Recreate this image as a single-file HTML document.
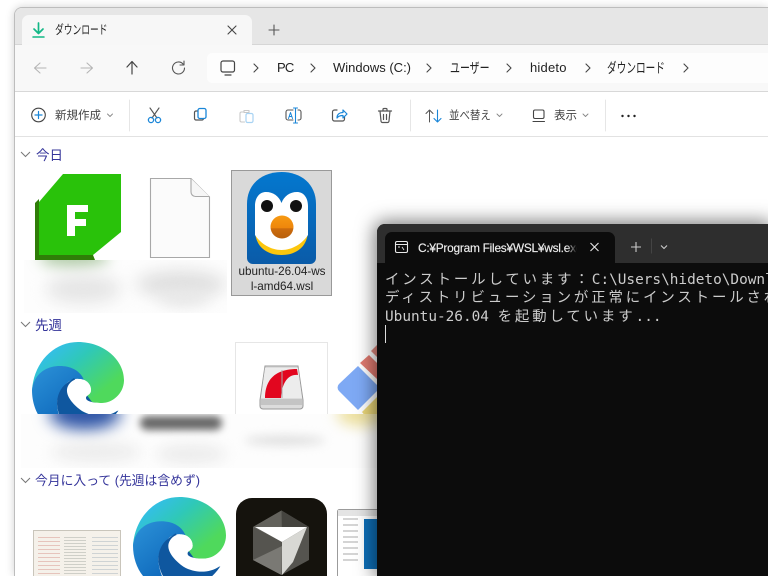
<!DOCTYPE html>
<html lang="ja"><head><meta charset="utf-8"><title>WSL</title>
<style>
html,body{margin:0;padding:0;width:768px;height:576px;overflow:hidden;background:#fff}
#p{position:relative;width:768px;height:576px;overflow:hidden;background:#fff;font-family:"Liberation Sans","Noto Sans CJK JP",sans-serif}
.t{position:absolute;white-space:nowrap;color:#222;font-size:13px;line-height:18px}
.k{transform-origin:0 50%}
.a{position:absolute}
svg{position:absolute;overflow:hidden}
.h{color:#34349a;font-size:13.5px}
.tb{color:#444;font-size:11.5px}
#win{position:absolute;left:14px;top:7px;width:754px;height:569px;box-sizing:border-box;background:#fff;border:1px solid #bdbdbd;border-right:0;border-bottom:0;border-radius:8px 0 0 0;box-shadow:0 0 9px rgba(0,0,0,.18)}
#term{position:absolute;left:377px;top:224px;width:391px;height:352px;background:#0c0c0c;border-radius:8px 0 0 0;box-shadow:0 0 18px 3px rgba(0,0,0,.5);overflow:hidden}
.l{position:absolute;left:8px;width:383px;overflow:hidden;white-space:pre;font-family:"DejaVu Sans Mono","Noto Sans CJK JP",monospace;font-size:14.4px;line-height:18px;color:#cccccc}
.j{letter-spacing:2.9px;font-family:"Noto Sans CJK JP",sans-serif;font-weight:400}
.b{position:absolute;border-radius:50%}
</style></head><body><div id="p">

<div id="win"></div>
<div class="a" style="left:15px;top:8px;width:753px;height:36px;background:#e6e6e6;border-radius:7px 0 0 0"></div>
<div class="a" style="left:15px;top:44px;width:753px;height:1px;background:#d6d6d6"></div>
<div class="a" style="left:22px;top:15px;width:230px;height:30px;background:#f7f7f7;border-radius:7px 7px 0 0"></div>
<div class="a" style="left:15px;top:45px;width:753px;height:46px;background:#f8f8f8"></div>
<div class="a" style="left:15px;top:91px;width:753px;height:1px;background:#d8d8d8"></div>
<div class="a" style="left:207px;top:53px;width:561px;height:30px;background:#fdfdfd;border-radius:5px 0 0 5px"></div>
<div class="a" style="left:15px;top:136px;width:753px;height:1px;background:#e2e2e2"></div>

<svg style="left:0;top:0" width="768" height="140" fill="none" stroke-linecap="round" stroke-linejoin="round">
<path d="M38.500 23V33M34 29l4.500 4.500L43 29" stroke="#12b886" stroke-width="1.700"/><path d="M33 37H44" stroke="#12b886" stroke-width="1.500"/>
<path d="M228 26l8 8M236 26l-8 8" stroke="#444" stroke-width="1.100"/>
<path d="M274 25V35M269 30H279" stroke="#555" stroke-width="1.100"/>
<path d="M46 68H35M40 63l-5.500 5 5.500 5" stroke="#b5b5b5" stroke-width="1.100"/>
<path d="M81 68H92M87 63l5.500 5-5.500 5" stroke="#b5b5b5" stroke-width="1.100"/>
<path d="M132 74V62M127 67l5-5.500 5 5.500" stroke="#444" stroke-width="1.200"/>
<path d="M183 64a6 6 0 1 0 1.500 4M184 61v4h-4" stroke="#555" stroke-width="1.100"/>
<rect x="221" y="61" width="13.500" height="11" rx="2" stroke="#444" stroke-width="1.200"/><path d="M225 75h6" stroke="#444" stroke-width="1.200"/>
<path d="M254 64l4 4-4 4M311 64l4 4-4 4M427 64l4 4-4 4M507 64l4 4-4 4M586 64l4 4-4 4M684 64l4 4-4 4" stroke="#444" stroke-width="1.100"/>
<circle cx="38.500" cy="115" r="6.800" stroke="#444" stroke-width="1.100"/><path d="M38.500 111.500v7M35 115h7" stroke="#1a86d8" stroke-width="1.200"/>
<path d="M107.500 114l2.500 2.500 2.500-2.500M497 114l2.500 2.500 2.500-2.500M583 114l2.500 2.500 2.500-2.500" stroke="#888" stroke-width=".9"/>
<path d="M129.500 100v31M410.500 100v31M605.500 100v31" stroke="#e6e6e6" stroke-width="1"/>
<path d="M150 108l7 10M159 108l-7 10" stroke="#555" stroke-width="1.100"/><circle cx="151" cy="120" r="2.600" stroke="#1a86d8" stroke-width="1.300"/><circle cx="158" cy="120" r="2.600" stroke="#1a86d8" stroke-width="1.300"/>
<path d="M198 111h-2a1.500 1.500 0 0 0-1.500 1.500v6a1.500 1.500 0 0 0 1.500 1.500h6a1.500 1.500 0 0 0 1.500-1.500" stroke="#555" stroke-width="1.200"/><rect x="198" y="108.500" width="8" height="10" rx="1.800" stroke="#1a86d8" stroke-width="1.300"/>
<path d="M243 112h-1.500a1.500 1.500 0 0 0-1.500 1.500v7a1.500 1.500 0 0 0 1.500 1.500h3M244 110.500h5v2h-5z" stroke="#c8c8c8" stroke-width="1.100"/><rect x="246" y="113.500" width="7" height="9" rx="1.500" stroke="#a8d3f3" stroke-width="1.200"/>
<path d="M293 110h-5a2 2 0 0 0-2 2v6a2 2 0 0 0 2 2h5M298 110h1a2 2 0 0 1 2 2v6a2 2 0 0 1-2 2h-1" stroke="#555" stroke-width="1.100"/><path d="M295.500 108v15M293.500 108h4M293.500 123h4" stroke="#1a86d8" stroke-width="1.100"/><path d="M288.500 118.500l2-6 2 6M289.300 116.500h2.500" stroke="#1a86d8" stroke-width="1"/>
<path d="M337 110h-2.500a2 2 0 0 0-2 2v7a2 2 0 0 0 2 2h8a2 2 0 0 0 2-2v-2" stroke="#555" stroke-width="1.200"/><path d="M337 118c0-4 3-5.500 6-5.500V110l4 4-4 4v-2.500c-3 0-5 1-6 2.500z" stroke="#1a86d8" stroke-width="1.200"/>
<path d="M378.500 111h13M383 111v-1.500a1 1 0 0 1 1-1h2a1 1 0 0 1 1 1v1.500M380 111l1 10a1.500 1.500 0 0 0 1.500 1.500h5a1.500 1.500 0 0 0 1.500-1.500l1-10M383.500 114.500v5M386.500 114.500v5" stroke="#555" stroke-width="1.200"/>
<path d="M429.500 122v-12M426 113.500l3.500-3.500 3.500 3.500" stroke="#555" stroke-width="1"/><path d="M437.500 110v12M434 118.500l3.500 3.500 3.500-3.500" stroke="#1a86d8" stroke-width="1.100"/>
<rect x="533.500" y="110" width="10.500" height="8.500" rx="1.500" stroke="#444" stroke-width="1.100"/><path d="M533 121.500h11.500" stroke="#444" stroke-width="1.100"/>
<circle cx="622.500" cy="116" r="1.200" fill="#222"/><circle cx="628.500" cy="116" r="1.200" fill="#222"/><circle cx="634.500" cy="116" r="1.200" fill="#222"/>
</svg>

<div class="t k" style="left:55px;top:21px;font-size:12.500px;transform:scaleX(.7)">ダウンロード</div>
<div class="t" style="left:277px;top:59px;letter-spacing:-.8px">PC</div>
<div class="t" style="left:333px;top:59px">Windows (C:)</div>
<div class="t k" style="left:450px;top:59px;font-size:14px;transform:scaleX(.71)">ユーザー</div>
<div class="t" style="left:530px;top:59px;letter-spacing:.2px">hideto</div>
<div class="t k" style="left:607px;top:59px;font-size:14px;transform:scaleX(.69)">ダウンロード</div>
<div class="t tb" style="left:55px;top:107px">新規作成</div>
<div class="t tb k" style="left:449px;top:107px;transform:scaleX(.91)">並べ替え</div>
<div class="t tb" style="left:554px;top:107px">表示</div>

<svg style="left:0;top:0" width="60" height="500" fill="none"><path d="M21 152l4.500 4.500L30 152M21 322l4.500 4.500L30 322M21 478l4.500 4.500L30 478" stroke="#777" stroke-width="1"/></svg>
<div class="t h" style="left:36px;top:147px">今日</div>
<div class="t h" style="left:35px;top:317px">先週</div>
<div class="t h" style="left:35px;top:472px;font-size:12.800px">今月に入って (先週は含めず)</div>

<!-- F icon -->
<svg style="left:0;top:0" width="130" height="262">
<path d="M35 203L39 199V255H93L95 260H35Z" fill="#2f7d08"/>
<path d="M39 202L63 174H121V232L93 255H39Z" fill="#29c20a"/>
<path d="M67 205H88V212H75V219H86V226H75V236H67Z" fill="#fff"/>
</svg>
<svg style="left:0;top:0" width="215" height="262"><path d="M150.500 178.500H191L209.500 197V257.500H150.500Z" fill="#fbfbfb" stroke="#a8a8a8" stroke-width="1.100"/><path d="M191 178.500V192a4.500 4.500 0 0 0 4.500 4.500H209.500" fill="#f6f6f6" stroke="#a8a8a8" stroke-width="1.100"/></svg>

<!-- selection + penguin -->
<div class="a" style="left:231px;top:170px;width:99px;height:124px;background:#d9d9d9;border:1px solid #999"></div>
<svg style="left:0;top:0" width="340" height="270">
<defs>
<linearGradient id="pb" x1="0" y1="0" x2="0" y2="1"><stop offset="0" stop-color="#0478cf"/><stop offset="1" stop-color="#0a5ba8"/></linearGradient>
<linearGradient id="beak" x1="0" y1="0" x2="0" y2="1"><stop offset="0" stop-color="#f79a12"/><stop offset=".55" stop-color="#ee860c"/><stop offset=".56" stop-color="#cc6c0d"/><stop offset="1" stop-color="#b85f0c"/></linearGradient>
</defs>
<path d="M247 204C247 184 262 172 281.500 172C301 172 316 184 316 204V258a6 6 0 0 1-6 6H253a6 6 0 0 1-6-6Z" fill="url(#pb)"/>
<path d="M255 230C255 246 266 255 281.500 255C297 255 308 246 308 230Z" fill="#fcc60d"/>
<path d="M255 206C255 197 260 192 266 192C273 192 279 196 281.500 203C284 196 290 192 297 192C303 192 308 197 308 206V235C302 244 292 250 281.500 250C271 250 261 244 255 235Z" fill="#fff"/>
<circle cx="267" cy="206" r="6" fill="#111"/><circle cx="296" cy="206" r="6" fill="#111"/>
<circle cx="282" cy="227" r="11.500" fill="url(#beak)"/>
</svg>
<div class="t" style="left:232px;top:264px;width:100px;text-align:center;font-size:11.700px;line-height:15px;color:#222">ubuntu-26.04-ws<br>l-amd64.wsl</div>

<!-- blurred labels row 1 -->
<div class="a" style="left:24px;top:260px;width:203px;height:53px;background:#fdfdfd;overflow:hidden">
<div class="b" style="left:15px;top:-14px;width:70px;height:22px;background:#7aa86a;filter:blur(7px);opacity:.55"></div>
<div class="b" style="left:22px;top:14px;width:75px;height:30px;background:#e6e6e6;filter:blur(8px)"></div>
<div class="b" style="left:112px;top:10px;width:90px;height:28px;background:#e0e0e0;filter:blur(8px)"></div>
<div class="b" style="left:135px;top:30px;width:50px;height:16px;background:#e8e8e8;filter:blur(7px)"></div>
</div>

<!-- edge -->
<svg width="0" height="0" style="left:0;top:0"><defs>
<linearGradient id="eg" x1=".1" y1=".1" x2=".85" y2=".7"><stop offset="0" stop-color="#35bcf5"/><stop offset=".45" stop-color="#2fc8b8"/><stop offset="1" stop-color="#4fd95c"/></linearGradient>
<linearGradient id="eb" x1="0" y1="0" x2=".6" y2="1"><stop offset="0" stop-color="#2c92d8"/><stop offset="1" stop-color="#0a63b8"/></linearGradient>
<symbol id="edge" viewBox="0 0 92 92">
<path d="M0 48C2 20 22 0 46 0C72 0 92 18 92 38C92 52 80 61 70 61C60 61 54 59 54 56C54 53 59 53 59 48C59 42 54 37 47 37L25 30Z" fill="url(#eg)"/>
<path d="M0 48C2 32 14 24 28 24C38 24 48 28 52 38C45 35 38 38 35 41C30 46 25 54 25 62C26 76 32 88 40 92C15 92 0 72 0 48Z" fill="url(#eb)"/>
<path d="M35 41C28 46 25 54 25 62C26 76 34 88 44 92C58 92 76 86 88 66L60 60L42 36Z" fill="#0f579f"/>
<path d="M47 37C54 37 59 42 59 48C59 53 54 53 54 56C54 59 60 61 70 61C80 61 88 57 92 50L92 67L85 69C76 75 62 76 50 69C40 62 32 52 36 44C38 40 42 37 47 37Z" fill="#fff"/>
</symbol></defs></svg>
<svg style="left:32px;top:342px" width="92" height="92"><use href="#edge" width="92" height="92"/></svg>
<svg style="left:133px;top:497px" width="93" height="79"><use href="#edge" width="93" height="93"/></svg>

<!-- archive tile -->
<div class="a" style="left:235px;top:342px;width:91px;height:90px;background:#fff;border:1px solid #e6e6e6"></div>
<svg style="left:0;top:0" width="330" height="420">
<path d="M265 366H298L303 400V406a3 3 0 0 1-3 3H263a3 3 0 0 1-3-3V400Z" fill="#dcdcdc" stroke="#9a9a9a"/>
<path d="M265 368H298L302 398H261Z" fill="#ececec"/>
<path d="M265 398C265 380 275 369 297 369L298 375C290 374 282 380 281 398Z" fill="#e2061f"/>
<path d="M282 370V398" stroke="#aaa"/><path d="M261 399H302V405H261Z" fill="#c4c4c4"/>
</svg>

<!-- colorful diamond -->
<svg style="left:0;top:0" width="378" height="440">
<path d="M360 363L369 355L385 371L377 379Z" fill="#e07a70"/>
<path d="M371 351L380 342L395 357L386 366Z" fill="#e08a80"/>
<path d="M358 366L380 388L358 410L339 391a5 5 0 0 1 0-7Z" fill="#7ea9f4"/>
<path d="M362 412L380 394L400 414L380 434Z" fill="#e9d578"/>
</svg>

<!-- blurred labels row 2 -->
<div class="a" style="left:21px;top:414px;width:356px;height:54px;background:#fdfdfd;overflow:hidden">
<div class="b" style="left:28px;top:-18px;width:72px;height:34px;background:#2f55a6;filter:blur(8px)"></div>
<div class="b" style="left:119px;top:2px;width:82px;height:14px;background:#666;filter:blur(4px);border-radius:7px"></div>
<div class="b" style="left:30px;top:28px;width:90px;height:20px;background:#ececec;filter:blur(7px)"></div>
<div class="b" style="left:135px;top:30px;width:70px;height:20px;background:#ececec;filter:blur(7px)"></div>
<div class="b" style="left:224px;top:22px;width:80px;height:9px;background:#dcdcdc;filter:blur(5px)"></div>
<div class="b" style="left:316px;top:-12px;width:50px;height:24px;background:#ecdf9c;filter:blur(7px)"></div>
</div>

<!-- bottom row -->
<div class="a" style="left:33px;top:530px;width:88px;height:46px;background:#f5f1ea;border:1px solid #c9c5bb;border-bottom:0;box-sizing:border-box;overflow:hidden">
<div style="position:absolute;left:4px;top:6px;width:22px;height:39px;background:repeating-linear-gradient(#e6c4bc 0 1px,#f5f1ea 1px 4px)"></div>
<div style="position:absolute;left:30px;top:6px;width:22px;height:39px;background:repeating-linear-gradient(#cfcfc8 0 1px,#f5f1ea 1px 3px)"></div>
<div style="position:absolute;left:58px;top:6px;width:26px;height:39px;background:repeating-linear-gradient(#cfd3d4 0 1px,#f5f1ea 1px 4px)"></div>
</div>
<svg style="left:0;top:490px" width="378" height="86">
<rect x="236" y="8" width="91" height="100" rx="16" fill="#15130d"/>
<path d="M281.500 20.500L309 37V70L281.500 85L253 70V37Z" fill="#55544f"/>
<path d="M281.500 20.500L309 37L282 52Z" fill="#45443f"/>
<path d="M253 37L281.500 20.500L282 52Z" fill="#63625c"/>
<path d="M253 70L282 56L281.500 85Z" fill="#7a7974"/>
<path d="M255 37L307 37L282 52Z" fill="#fff"/>
<path d="M282 52L307 37L293 72L282 85Z" fill="#d8d8d4"/>
<rect x="337.500" y="19.500" width="50" height="70" rx="2" fill="#fff" stroke="#9b9b9b"/>
<rect x="338" y="20" width="48" height="6" fill="#e4e4e4"/>
<path d="M343 29h15M343 35h15M343 41h15M343 47h15M343 52h15M343 58h15M343 64h15M343 70h15" stroke="#aaa" stroke-width="1"/>
<rect x="364" y="29" width="20" height="50" fill="#0e6fb8"/>
</svg>

<!-- terminal -->
<div id="term">
<div class="a" style="left:0;top:0;width:391px;height:39px;background:#2e2e2e"></div>
<div class="a" style="left:8px;top:8px;width:230px;height:32px;background:#0c0c0c;border-radius:7px 7px 0 0"></div>
<svg style="left:0;top:0" width="391" height="40" fill="none">
<rect x="18.500" y="17.500" width="12" height="11" rx="1.500" stroke="#e8e8e8" stroke-width="1.100"/><path d="M18.500 20.500h12" stroke="#e8e8e8"/><path d="M21 23h2M25 23l2 3" stroke="#ddd" stroke-width=".9"/>
<path d="M213.500 19l8 8M221.500 19l-8 8" stroke="#e6e6e6" stroke-width="1.100"/>
<path d="M259 18v10M254 23h10" stroke="#ccc" stroke-width="1.100"/>
<path d="M274.500 14.500v15" stroke="#444" stroke-width="1"/>
<path d="M284 21.500l3 3 3-3" stroke="#ccc" stroke-width="1.100"/>
</svg>
<div class="t" style="left:41px;top:15px;width:159px;overflow:hidden;color:#eee;font-size:11.900px;letter-spacing:-.25px;-webkit-text-stroke:.15px #eee">C:¥Program Files¥WSL¥wsl.exe</div>
<div class="a" style="left:190px;top:15px;width:10px;height:18px;background:linear-gradient(90deg,rgba(12,12,12,0),#0c0c0c)"></div>
<div class="l" style="top:46px"><span class="j">インストールしています：</span>C:\Users\hideto\Downloads</div>
<div class="l" style="top:64px"><span class="j">ディストリビューションが正常にインストールされました</span></div>
<div class="l" style="top:83px">Ubuntu-26.04 <span class="j">を起動しています</span>...</div>
<div class="a" style="left:8px;top:101px;width:1px;height:18px;background:#ddd"></div>
</div>

</div></body></html>
